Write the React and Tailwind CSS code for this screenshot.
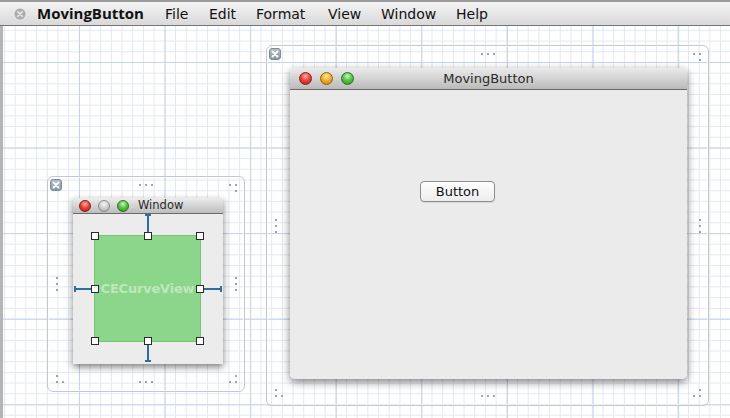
import React from 'react';

// menu bar entries: label + slot width so items land where the reference has them
const MENU = [
  { label: 'File', w: 'w-[44px]' },
  { label: 'Edit', w: 'w-[47px]' },
  { label: 'Format', w: 'w-[72px]' },
  { label: 'View', w: 'w-[53px]' },
  { label: 'Window', w: 'w-[75px]' },
  { label: 'Help', w: 'w-[50px]' },
];

const LIGHTS = {
  red: 'bg-[radial-gradient(circle_at_50%_30%,#ffb3ab_0%,#e8463c_45%,#b3170f_100%)] border-[#8e1b14]',
  yellow: 'bg-[radial-gradient(circle_at_50%_30%,#ffe7a6_0%,#f2b32a_45%,#b87707_100%)] border-[#94650c]',
  green: 'bg-[radial-gradient(circle_at_50%_30%,#c9f7bd_0%,#5cc44a_45%,#2a8a1c_100%)] border-[#2c7321]',
  gray: 'bg-[radial-gradient(circle_at_50%_30%,#f6f6f6_0%,#cfcfcf_50%,#9d9d9d_100%)] border-[#8a8a8a]',
};

function Light({ color, size }) {
  return <span className={`block rounded-full border ${size} ${LIGHTS[color]}`} />;
}

function Dot() {
  return <span className="block w-[2px] h-[2px] rounded-full bg-[#80868f]" />;
}

function Corner({ cells, className }) {
  return (
    <div className={`absolute grid grid-cols-2 gap-[4px] ${className}`}>
      {cells.map((on, i) => (on ? <Dot key={i} /> : <span key={i} className="block w-[2px] h-[2px]" />))}
    </div>
  );
}

function FrameDots() {
  return (
    <>
      <div className="absolute top-[7px] left-1/2 -translate-x-1/2 flex gap-[4px]">
        <Dot /><Dot /><Dot />
      </div>
      <div className="absolute bottom-[8px] left-1/2 -translate-x-1/2 flex gap-[4px]">
        <Dot /><Dot /><Dot />
      </div>
      <div className="absolute left-[8px] top-1/2 -translate-y-1/2 flex flex-col gap-[4px]">
        <Dot /><Dot /><Dot />
      </div>
      <div className="absolute right-[7px] top-1/2 -translate-y-1/2 flex flex-col gap-[4px]">
        <Dot /><Dot /><Dot />
      </div>
      <Corner cells={[1, 1, 0, 1]} className="top-[7px] right-[7px]" />
      <Corner cells={[1, 0, 1, 1]} className="bottom-[8px] left-[8px]" />
      <Corner cells={[0, 1, 1, 1]} className="bottom-[8px] right-[7px]" />
    </>
  );
}

function CloseBadge() {
  return (
    <div className="absolute top-[2px] left-[2px] w-[12px] h-[12px] rounded-[3px] bg-gradient-to-b from-[#b4bdc8] to-[#8e99a6] border border-[#7f8a97] flex items-center justify-center">
      <svg width="8" height="8" viewBox="0 0 8 8">
        <path d="M1.5 1.5 L6.5 6.5 M6.5 1.5 L1.5 6.5" stroke="#fff" strokeWidth="1.8" strokeLinecap="round" />
      </svg>
    </div>
  );
}

function Handle({ className }) {
  return <span className={`absolute z-10 w-[8px] h-[8px] bg-white border border-[#2b2b2b] ${className}`} />;
}

function CurveView() {
  return (
    <div className="relative w-[107px] h-[107px] bg-[#8bd68b] border border-[#74c474] flex items-center justify-center">
      <span className="text-[13px] font-bold text-white/45 tracking-[-0.2px] whitespace-nowrap font-['DejaVu_Sans',sans-serif]">
        CECurveView
      </span>

      {/* springs / struts */}
      <div className="absolute bottom-full left-1/2 -translate-x-1/2 h-[22px] flex flex-col items-center">
        <span className="block w-[6px] h-[2px] bg-[#2f6d9c]" />
        <span className="block w-[2px] flex-1 bg-[#2f6d9c]" />
      </div>
      <div className="absolute top-full left-1/2 -translate-x-1/2 h-[21px] flex flex-col items-center">
        <span className="block w-[2px] flex-1 bg-[#2f6d9c]" />
        <span className="block w-[6px] h-[2px] bg-[#2f6d9c]" />
      </div>
      <div className="absolute right-full top-1/2 -translate-y-1/2 w-[21px] flex items-center">
        <span className="block w-[2px] h-[6px] bg-[#2f6d9c]" />
        <span className="block h-[2px] flex-1 bg-[#2f6d9c]" />
      </div>
      <div className="absolute left-full top-1/2 -translate-y-1/2 w-[22px] flex items-center">
        <span className="block h-[2px] flex-1 bg-[#2f6d9c]" />
        <span className="block w-[2px] h-[6px] bg-[#2f6d9c]" />
      </div>

      <Handle className="-top-[4px] -left-[4px]" />
      <Handle className="-top-[4px] left-1/2 -translate-x-1/2" />
      <Handle className="-top-[4px] -right-[4px]" />
      <Handle className="top-1/2 -translate-y-1/2 -left-[4px]" />
      <Handle className="top-1/2 -translate-y-1/2 -right-[4px]" />
      <Handle className="-bottom-[4px] -left-[4px]" />
      <Handle className="-bottom-[4px] left-1/2 -translate-x-1/2" />
      <Handle className="-bottom-[4px] -right-[4px]" />
    </div>
  );
}

function SmallWindow() {
  return (
    <div className="absolute left-[25px] top-[21px] w-[150px] h-[166px] flex flex-col shadow-[0_3px_7px_rgba(0,0,0,0.5)]">
      <div className="h-[16px] shrink-0 flex items-center gap-[7px] pl-[6px] bg-gradient-to-b from-[#ececec] to-[#bdbdbd] border-b border-[#6b6b6b]">
        <Light color="red" size="w-[12px] h-[12px]" />
        <Light color="gray" size="w-[12px] h-[12px]" />
        <Light color="green" size="w-[12px] h-[12px]" />
        <span className="ml-[2px] text-[11.5px] leading-none text-[#2a2a2a] font-['DejaVu_Sans',sans-serif]">Window</span>
      </div>
      <div className="flex-1 bg-[#ececec] pl-[21px] pt-[21px]">
        <CurveView />
      </div>
    </div>
  );
}

function BigWindow() {
  return (
    <div className="absolute left-[23px] top-[22px] w-[397px] h-[311px] flex flex-col rounded-[5px] shadow-[0_3px_8px_rgba(0,0,0,0.5)]">
      <div className="relative h-[22px] shrink-0 flex items-center gap-[8px] pl-[9px] rounded-t-[5px] bg-gradient-to-b from-[#ebebeb] to-[#bababa] border-b border-[#6a6a6a]">
        <Light color="red" size="w-[13px] h-[13px]" />
        <Light color="yellow" size="w-[13px] h-[13px]" />
        <Light color="green" size="w-[13px] h-[13px]" />
        <span className="absolute inset-x-0 top-[4px] text-center text-[13px] leading-[14px] text-[#2a2a2a] font-['DejaVu_Sans',sans-serif]">
          MovingButton
        </span>
      </div>
      <div className="flex-1 rounded-b-[5px] bg-[#ebebeb] pl-[130px] pt-[89px]">
        <button className="w-[75px] h-[21px] rounded-[4px] border border-[#8d8d8d] bg-gradient-to-b from-white to-[#ececec] shadow-[0_1px_0_rgba(0,0,0,0.08)] text-[13px] leading-none text-[#111] font-['DejaVu_Sans',sans-serif]">
          Button
        </button>
      </div>
    </div>
  );
}

function Frame({ className, children }) {
  return (
    <div className={`absolute rounded-[6px] border border-[#c3c8d0] shadow-[inset_0_0_0_1px_rgba(255,255,255,0.6)] ${className}`}>
      <CloseBadge />
      <FrameDots />
      {children}
    </div>
  );
}

export default function App() {
  return (
    <div className="w-[730px] h-[418px] overflow-hidden flex flex-col bg-white font-['DejaVu_Sans',sans-serif]">
      {/* menu bar */}
      <div className="h-[26px] shrink-0 flex items-center border-t-2 border-t-[#9a9a9a] border-b border-b-[#747474] bg-gradient-to-b from-[#f4f4f4] to-[#d9d9d9]">
        <div className="w-[37px] flex justify-center pl-[2px]">
          <svg width="12" height="12" viewBox="0 0 12 12">
            <circle cx="6" cy="6" r="5.5" fill="#adadad" />
            <path d="M3.8 3.8 L8.2 8.2 M8.2 3.8 L3.8 8.2" stroke="#ececec" strokeWidth="1.6" strokeLinecap="round" />
          </svg>
        </div>
        <span className="w-[128px] text-[15px] font-bold text-[#111] font-['Open_Sans',sans-serif] leading-none">MovingButton</span>
        {MENU.map((m) => (
          <span key={m.label} className={`${m.w} text-[14px] text-[#111] leading-none`}>
            {m.label}
          </span>
        ))}
      </div>

      {/* canvas */}
      <div className="relative flex-1 border-l-[3px] border-l-[#b5b5b5] bg-white bg-[linear-gradient(to_right,#c7d3e6_1px,transparent_1px),linear-gradient(to_bottom,#c7d3e6_1px,transparent_1px),linear-gradient(to_right,#e2e8f1_1px,transparent_1px),linear-gradient(to_bottom,#e2e8f1_1px,transparent_1px)] bg-size-[85.6px_85.6px,85.6px_85.6px,10.7px_10.7px,10.7px_10.7px] bg-position-[76px_36px,76px_36px,1px_3.9px,1px_3.9px]">
        <Frame className="left-[44px] top-[150px] w-[198px] h-[216px]">
          <SmallWindow />
        </Frame>
        <Frame className="left-[263px] top-[19px] w-[443px] h-[361px]">
          <BigWindow />
        </Frame>
      </div>
    </div>
  );
}
